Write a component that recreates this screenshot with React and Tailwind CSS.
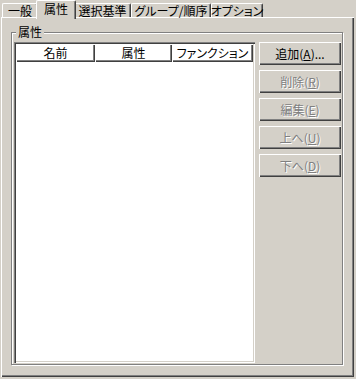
import React from 'react';

const raised = 'shadow-[inset_1px_1px_0_#ffffff,inset_-1px_-1px_0_#404040,inset_-2px_-2px_0_#808080]';

const tabs = [
  { label: '一般', w: 'w-[36px]' },
  { label: '属性', w: 'w-[40px]', active: true },
  { label: '選択基準', w: 'w-[57px]' },
  { label: 'グループ/順序', w: 'w-[80px]' },
  { label: 'オプション', w: 'w-[52px]' },
];

const Tab = ({ label, w, active }) =>
  active ? (
    <div className={`${w} -mx-[2px] -mb-[2px] h-[19px] relative z-10 bg-[#d4d0c8] rounded-t-[2px] border-l border-t border-white border-r border-r-[#404040] shadow-[inset_-1px_0_0_#808080] flex justify-center pt-[2px] leading-[12px] whitespace-nowrap`}>
      {label}
    </div>
  ) : (
    <div className={`${w} h-[14px] bg-[#d4d0c8] rounded-t-[2px] border-l border-t border-white border-r border-r-[#404040] shadow-[inset_-1px_0_0_#808080] flex justify-center pt-[1px] leading-[12px] whitespace-nowrap`}>
      {label}
    </div>
  );

const Button = ({ children, disabled }) => (
  <div
    className={`h-[23px] w-[82px] flex items-center justify-center whitespace-nowrap ${raised} ${
      disabled ? 'text-[#808080] [text-shadow:1px_1px_0_#ffffff]' : 'text-black'
    }`}
  >
    {children}
  </div>
);

const Col = ({ w, children }) => (
  <div className={`${w} h-[18px] flex items-center justify-center whitespace-nowrap ${raised}`}>{children}</div>
);

export default function App() {
  return (
    <div className="w-[356px] h-[379px] bg-[#d4d0c8] overflow-hidden text-[12px] leading-none text-black font-['Noto_Sans_CJK_JP','MS_UI_Gothic',sans-serif] [font-feature-settings:'palt']">
      {/* tab strip */}
      <div className="flex items-end h-[17px] pl-[2px]">
        {tabs.map((t) => (
          <Tab key={t.label} {...t} />
        ))}
      </div>

      {/* tab page */}
      <div className="ml-[1px] w-[353px] h-[360px] bg-[#d4d0c8] pl-[10px] pt-[15px] shadow-[inset_1px_1px_0_#ffffff,inset_-1px_-1px_0_#404040,inset_-2px_-2px_0_#808080]">
        <div className="relative w-[332px] h-[333px] border border-[#808080] shadow-[inset_1px_1px_0_#ffffff,1px_1px_0_#ffffff] pl-[2px] pt-[9px]">
          <span className="absolute -top-[7px] left-[4px] px-[2px] bg-[#d4d0c8] leading-[12px]">属性</span>

          <div className="flex gap-[4px]">
            {/* list view */}
            <div className="w-[241px] h-[321px] bg-white p-[2px] shadow-[inset_1px_1px_0_#808080,inset_2px_2px_0_#404040,inset_-1px_-1px_0_#ffffff,inset_-2px_-2px_0_#d4d0c8]">
              <div className="flex">
                <Col w="w-[79px]">名前</Col>
                <Col w="w-[77px]">属性</Col>
                <Col w="w-[81px]">ファンクション</Col>
              </div>
            </div>

            {/* buttons */}
            <div className="flex flex-col gap-[5px]">
              <Button>
                追加(<span className="underline">A</span>)...
              </Button>
              <Button disabled>
                削除(<span className="underline">R</span>)
              </Button>
              <Button disabled>
                編集(<span className="underline">E</span>)
              </Button>
              <Button disabled>
                上へ(<span className="underline">U</span>)
              </Button>
              <Button disabled>
                下へ(<span className="underline">D</span>)
              </Button>
            </div>
          </div>
        </div>
      </div>
    </div>
  );
}
